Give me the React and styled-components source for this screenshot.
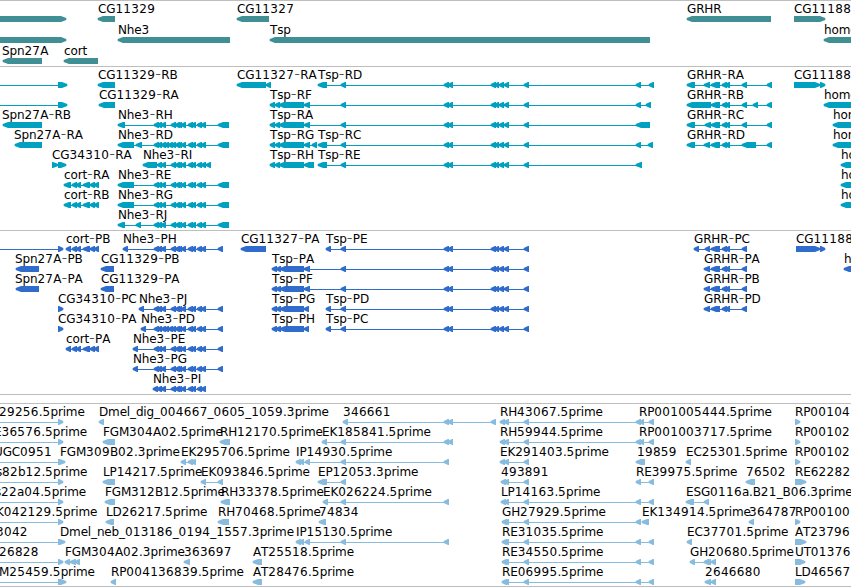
import React from 'react';
import styled, { createGlobalStyle } from 'styled-components';

const WIDTH = 851;

// exon runs shared by several transcripts, as [start, end]
const NHE_A = [[154, 159], [157, 162], [161, 166]];
const NHE_B = [[171, 176], [175, 180], [178, 182], [181, 186], [188, 193], [191, 196], [197, 202], [201, 206]];
const NHE = [...NHE_A, ...NHE_B];
const NHE_DENSE = [...NHE_A, [164, 169], [168, 173], ...NHE_B];
const TSP_MID = [[341, 346], [444, 449], [448, 453], [491, 496], [495, 499], [499, 504], [504, 509], [524, 529]];
const TSP_R = [[270, 275], [275, 280], [279, 304]];
const TSP_P = [[272, 277], [276, 281], [280, 304]];
const GRHR = [[711, 720], [722, 727], [725, 730]];
const CORT_R = [[64, 71], [72, 77], [76, 81], [83, 90], [90, 95], [94, 99]];
const CORT_P = [[66, 71], [72, 77], [76, 81], [83, 90], [90, 95], [94, 99]];
const EST_A = [[500, 505], [504, 509], [524, 529]];
const EST_B = [[502, 507], [504, 509], [524, 529]];
const EST_END = [[636, 641], [649, 654]];

// left = minus strand, right = plus strand
const left = (x, label, ...exons) => ({ x, label, exons, dir: 'left' });
const right = (x, label, ...exons) => ({ x, label, exons, dir: 'right' });
const incoming = (end, label, x) => right(x, label, [-20, -12], [58, end]);

const genes = [
    [
        right(0, '', [-5, 66]),
        left(98, 'CG11329', [98, 115]),
        left(237, 'CG11327', [237, 269]),
        left(687, 'GRHR', [687, 771]),
        right(794, 'CG11188', [794, 825]),
    ],
    [
        right(0, '', [-5, 66]),
        left(118, 'Nhe3', [118, 230]),
        left(270, 'Tsp', [270, 650]),
        left(824, 'homer', [824, 870]),
    ],
    [left(2, 'Spn27A', [3, 42]), left(64, 'cort', [64, 98])],
];

const transcripts = [
    [
        incoming(67),
        left(98, 'CG11329-RB', [98, 115]),
        left(237, 'CG11327-RA', [237, 266], [266, 271]),
        left(318, 'Tsp-RD', [318, 327], ...TSP_MID, [636, 641], [649, 654]),
        left(687, 'GRHR-RA', [687, 695], [704, 710], ...GRHR, [742, 747], [767, 772]),
        right(794, 'CG11188-RA', [794, 820], [820, 825]),
    ],
    [
        incoming(67),
        left(99, 'CG11329-RA', [99, 115]),
        left(270, 'Tsp-RF', ...TSP_R, [304, 310], ...TSP_MID, [636, 641], [646, 651]),
        left(687, 'GRHR-RB', [687, 711], ...GRHR, [742, 747], [753, 758], [767, 772]),
        left(824, 'homer-RB', [824, 870]),
    ],
    [
        left(2, 'Spn27A-RB', [3, 42]),
        left(118, 'Nhe3-RH', [118, 125], ...NHE, [218, 229]),
        left(270, 'Tsp-RA', ...TSP_R, [304, 310], ...TSP_MID, [636, 650]),
        left(687, 'GRHR-RC', [687, 695], [705, 711], ...GRHR, [742, 747], [767, 772]),
        left(833, 'homer-RC', [833, 870]),
    ],
    [
        left(14, 'Spn27A-RA', [15, 42]),
        left(118, 'Nhe3-RD', [118, 134], [136, 142], ...NHE_DENSE, [218, 229]),
        left(270, 'Tsp-RG', ...TSP_R, [304, 310], [312, 317]),
        left(318, 'Tsp-RC', [318, 327], ...TSP_MID, [636, 641], [648, 653]),
        left(687, 'GRHR-RD', [687, 695], [704, 710], ...GRHR, [742, 756], [767, 772]),
        left(833, 'homer-RD', [833, 870]),
    ],
    [
        right(52, 'CG34310-RA', [52, 58], [58, 66]),
        left(143, 'Nhe3-RI', [143, 157], [157, 162], [161, 166], ...NHE_B, [206, 211]),
        left(270, 'Tsp-RH', ...TSP_R, [304, 314]),
        left(318, 'Tsp-RE', [318, 327], ...TSP_MID, [636, 642]),
        left(841, 'homer-RE', [841, 870]),
    ],
    [
        left(64, 'cort-RA', ...CORT_R),
        left(118, 'Nhe3-RE', [118, 134], ...NHE, [218, 229]),
        left(841, 'homer-RF', [841, 870]),
    ],
    [
        left(64, 'cort-RB', ...CORT_R),
        left(118, 'Nhe3-RG', [118, 134], ...NHE, [218, 229]),
        left(841, 'homer-RG', [841, 870]),
    ],
    [left(118, 'Nhe3-RJ', [118, 125], [136, 141], ...NHE, [218, 229])],
];

const proteins = [
    [
        incoming(63),
        left(66, 'cort-PB', ...CORT_P),
        left(123, 'Nhe3-PH', [123, 128], ...NHE, [218, 223]),
        left(241, 'CG11327-PA', [241, 266]),
        left(326, 'Tsp-PE', [326, 331], ...TSP_MID),
        left(694, 'GRHR-PC', [694, 699], [705, 710], ...GRHR, [742, 747]),
        right(796, 'CG11188-PA', [796, 820], [820, 825]),
    ],
    [
        left(15, 'Spn27A-PB', [16, 39]),
        left(101, 'CG11329-PB', [101, 114]),
        left(272, 'Tsp-PA', ...TSP_P, [304, 310], ...TSP_MID),
        left(704, 'GRHR-PA', [704, 710], ...GRHR, [742, 747]),
        left(844, 'homer-PB', [844, 870]),
    ],
    [
        left(15, 'Spn27A-PA', [16, 39]),
        left(101, 'CG11329-PA', [101, 114]),
        left(272, 'Tsp-PF', ...TSP_P, [304, 310], ...TSP_MID),
        left(704, 'GRHR-PB', [704, 710], ...GRHR, [742, 747]),
    ],
    [
        right(58, 'CG34310-PC', [58, 63]),
        left(139, 'Nhe3-PJ', [139, 144], ...NHE, [218, 223]),
        left(272, 'Tsp-PG', ...TSP_P, [304, 309]),
        left(326, 'Tsp-PD', [326, 331], ...TSP_MID),
        left(704, 'GRHR-PD', [704, 710], ...GRHR, [742, 747]),
    ],
    [
        right(58, 'CG34310-PA', [58, 63]),
        left(141, 'Nhe3-PD', [141, 146], ...NHE_DENSE, [218, 223]),
        left(272, 'Tsp-PH', ...TSP_P, [304, 309]),
        left(326, 'Tsp-PC', [326, 331], ...TSP_MID),
    ],
    [left(66, 'cort-PA', ...CORT_P), left(133, 'Nhe3-PE', [133, 138], ...NHE, [218, 223])],
    [left(133, 'Nhe3-PG', [133, 138], ...NHE, [218, 223])],
    [left(153, 'Nhe3-PI', [153, 158], ...NHE.slice(1))],
];

const ests = [
    [
        incoming(63, '29256.5prime', -1),
        left(99, 'Dmel_dig_004667_0605_1059.3prime', [99, 104]),
        left(343, '346661', [343, 348], [444, 449], [448, 453], [491, 496]),
        left(500, 'RH43067.5prime', ...EST_A, [636, 641], [640, 644], [649, 654]),
        left(639, 'RP001005444.5prime'),
        right(795, 'RP00104', [795, 800]),
    ],
    [
        incoming(63, 'E36576.5prime', -6),
        left(103, 'FGM304A02.5prime', [103, 115]),
        left(220, 'RH12170.5prime', [220, 230]),
        left(322, 'EK185841.5prime', [322, 327], [341, 346], [444, 449], [448, 453]),
        left(500, 'RH59944.5prime', ...EST_A, [636, 641], [640, 644], [649, 654]),
        left(639, 'RP001003717.5prime'),
        right(795, 'RP00102', [795, 800]),
    ],
    [
        incoming(65, 'UGC0951', -6),
        left(60, 'FGM309B02.3prime'),
        left(181, 'EK295706.5prime', [181, 186], [188, 193], [191, 196]),
        left(296, 'IP14930.5prime', [296, 301], [299, 304], [305, 310], [341, 346], [444, 449]),
        left(500, 'EK291403.5prime', ...EST_A),
        left(637, '19859', [636, 645]),
        left(686, 'EC25301.5prime', [686, 691]),
        right(795, 'RP00102', [795, 800]),
    ],
    [
        incoming(63, 's82b12.5prime', -4),
        left(103, 'LP14217.5prime', [103, 115]),
        left(201, 'EK093846.5prime', [201, 206], [218, 223]),
        left(318, 'EP12053.3prime', [318, 327], [341, 346]),
        left(501, '493891', [501, 506], [504, 509], [524, 529]),
        left(636, 'RE39975.5prime', ...EST_END),
        left(746, '76502', [746, 755]),
        right(795, 'RE62282', [795, 806]),
    ],
    [
        incoming(63, 's22a04.5prime', -5),
        left(105, 'FGM312B12.5prime', [105, 115]),
        left(221, 'RH33378.5prime', [221, 230]),
        left(323, 'EK026224.5prime', [323, 328], [341, 346], [444, 449]),
        left(501, 'LP14163.5prime', [501, 506], [504, 509], [524, 529], ...EST_END),
        left(686, 'ESG0116a.B21_B06.3prime', [686, 694], [704, 709]),
    ],
    [
        incoming(63, 'K042129.5prime', -4),
        left(106, 'LD26217.5prime', [106, 114]),
        left(218, 'RH70468.5prime', [218, 229]),
        left(319, '74834', [319, 326]),
        left(502, 'GH27929.5prime', ...EST_B, [636, 641]),
        left(642, 'EK134914.5prime', [642, 649]),
        left(749, '364787', [749, 754]),
        right(795, 'RP00100', [795, 800]),
    ],
    [
        incoming(65, '3042', -4),
        left(60, 'Dmel_neb_013186_0194_1557.3prime'),
        left(296, 'IP15130.5prime', [296, 301], [299, 304], [305, 310], [341, 346], [444, 449]),
        left(502, 'RE31035.5prime', ...EST_B, ...EST_END),
        left(687, 'EC37701.5prime', [687, 692]),
        right(795, 'AT23796', [795, 806]),
    ],
    [
        incoming(63, '26828', -1),
        left(65, 'FGM304A02.3prime', [65, 70], [70, 76], [75, 80]),
        left(184, '363697', [184, 190]),
        left(253, 'AT25518.5prime', [253, 262]),
        left(502, 'RE34550.5prime', ...EST_B, ...EST_END),
        left(690, 'GH20680.5prime', [690, 695], [704, 709], [706, 711], [711, 716]),
        right(795, 'UT01376', [795, 805]),
    ],
    [
        incoming(66, 'M25459.5prime', -1),
        left(111, 'RP004136839.5prime', [111, 116]),
        left(253, 'AT28476.5prime', [253, 262]),
        left(502, 'RE06995.5prime', ...EST_B, ...EST_END),
        left(705, '2646680', [705, 711], [711, 716]),
        right(795, 'LD46567', [795, 805]),
    ],
];

const arrow = ([start, end], dir) => {
    const head = Math.min(5, end - start - 1);
    if (dir === 'left') {
        return `M${end} 0V6H${start + head}L${start - 0.3} 4V2L${start + head} 0Z`;
    }
    return `M${start} 0V6H${end - head}L${end + 0.3} 4V2L${end - head} 0Z`;
};

function Name({ text }) {
    return text.split(/(\d+|-)/).filter(Boolean).map((part, i) => {
        if (part === '-') return <Hyphen key={i}>-</Hyphen>;
        if (/\d/.test(part)) return <Digits key={i}>{part}</Digits>;
        return part;
    });
}

function Track({ rows, color, rowHeight = 20, pad = 3 }) {
    return (
        <TrackPanel $pad={pad}>
            {rows.map((features, i) => (
                <Row key={i} $height={rowHeight}>
                    <Glyphs width={WIDTH} height="6" fill={color}>
                        {features.filter((f) => f.exons.length).map((f, j) => {
                            const start = f.exons[0][0];
                            const end = f.exons[f.exons.length - 1][1];
                            return (
                                <g key={j}>
                                    {f.exons.length > 1 && (
                                        <rect x={start + 3} y="3" width={end - start - 5} height="1" />
                                    )}
                                    {f.exons.map((exon) => <path key={exon[0]} d={arrow(exon, f.dir)} />)}
                                </g>
                            );
                        })}
                    </Glyphs>
                    {features.filter((f) => f.label).map((f) => (
                        <Label key={f.label} style={{ left: f.x }}><Name text={f.label} /></Label>
                    ))}
                </Row>
            ))}
        </TrackPanel>
    );
}

function App() {
    return (
        <>
            <GlobalStyle />
            <Browser>
                <Track rows={genes} color="#408f95" rowHeight={21} pad={2} />
                <Track rows={transcripts} color="#00a0c0" />
                <Track rows={proteins} color="#306ccc" />
                <Spacer />
                <Track rows={ests} color="#88bcde" pad={2} />
                <Spacer />
            </Browser>
        </>
    );
}

const GlobalStyle = createGlobalStyle`
    body {
        margin: 0;
        background: #fff;
        overflow: hidden;
    }
`;

const Browser = styled.main`
    display: flex;
    flex-direction: column;
    width: ${WIDTH}px;
    height: 587px;
    overflow: hidden;
    color: #000;
    font-family: 'DejaVu Sans', sans-serif;
    font-size: 12px;
    line-height: 15px;
    font-kerning: none;
    letter-spacing: -0.15px;
`;

const TrackPanel = styled.section`
    flex: none;
    border-top: 1px solid #bebebe;
    padding-bottom: ${({ $pad }) => $pad}px;
`;

const Spacer = styled.div`
    flex: none;
    height: 8px;
    border-top: 1px solid #bebebe;
`;

const Row = styled.div`
    position: relative;
    height: ${({ $height }) => $height}px;
    padding-top: 15px;
    box-sizing: border-box;
`;

const Glyphs = styled.svg`
    display: block;
`;

const Label = styled.span`
    position: absolute;
    top: 1px;
    white-space: nowrap;
`;

const Digits = styled.span`
    letter-spacing: 0.32px;
`;

const Hyphen = styled.span`
    font-family: 'DejaVu Sans Light', 'DejaVu Sans', sans-serif;
    font-size: 16px;
    font-weight: 200;
    line-height: 0;
    letter-spacing: 0.3px;
`;

export default App;
